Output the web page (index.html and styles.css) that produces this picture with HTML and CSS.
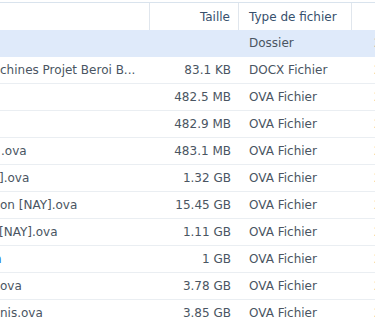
FILE: index.html
```html
<!DOCTYPE html>
<html lang="fr">
<head>
<meta charset="utf-8">
<title>Fichiers</title>
<link rel="stylesheet" href="styles.css">
</head>
<body>
<div class="grid">
  <div class="row head">
    <div class="cell name"></div>
    <div class="cell size">Taille</div>
    <div class="cell type">Type de fichier</div>
    <div class="cell date"></div>
  </div>
  <div class="row selected">
    <div class="cell name"></div>
    <div class="cell size"></div>
    <div class="cell type">Dossier</div>
    <div class="cell date">2024/03/12</div>
  </div>
  <div class="row">
    <div class="cell name">chines Projet Beroi B...</div>
    <div class="cell size">83.1 KB</div>
    <div class="cell type">DOCX Fichier</div>
    <div class="cell date">2024/03/12</div>
  </div>
  <div class="row">
    <div class="cell name"></div>
    <div class="cell size">482.5 MB</div>
    <div class="cell type">OVA Fichier</div>
    <div class="cell date">2024/03/12</div>
  </div>
  <div class="row">
    <div class="cell name"></div>
    <div class="cell size">482.9 MB</div>
    <div class="cell type">OVA Fichier</div>
    <div class="cell date">2024/03/12</div>
  </div>
  <div class="row">
    <div class="cell name"><span class="frag in1">.ova</span></div>
    <div class="cell size">483.1 MB</div>
    <div class="cell type">OVA Fichier</div>
    <div class="cell date">2024/03/12</div>
  </div>
  <div class="row">
    <div class="cell name"><span class="frag cut2">].ova</span></div>
    <div class="cell size">1.32 GB</div>
    <div class="cell type">OVA Fichier</div>
    <div class="cell date">2024/03/12</div>
  </div>
  <div class="row">
    <div class="cell name">on [NAY].ova</div>
    <div class="cell size">15.45 GB</div>
    <div class="cell type">OVA Fichier</div>
    <div class="cell date">2024/03/12</div>
  </div>
  <div class="row">
    <div class="cell name"><span class="frag cut1">[NAY].ova</span></div>
    <div class="cell size">1.11 GB</div>
    <div class="cell type">OVA Fichier</div>
    <div class="cell date">2024/03/12</div>
  </div>
  <div class="row">
    <div class="cell name"><span class="frag link cut5">n</span></div>
    <div class="cell size">1 GB</div>
    <div class="cell type">OVA Fichier</div>
    <div class="cell date">2024/03/12</div>
  </div>
  <div class="row">
    <div class="cell name">ova</div>
    <div class="cell size">3.78 GB</div>
    <div class="cell type">OVA Fichier</div>
    <div class="cell date">2024/03/12</div>
  </div>
  <div class="row">
    <div class="cell name">nis.ova</div>
    <div class="cell size">3.85 GB</div>
    <div class="cell type">OVA Fichier</div>
    <div class="cell date">2024/03/12</div>
  </div>
</div>
</body>
</html>
```
FILE: styles.css
```css
html, body {
  margin: 0;
  padding: 0;
  background: #ffffff;
  overflow: hidden;
}
body {
  font-family: "DejaVu Sans", Verdana, sans-serif;
  font-size: 12px;
  color: #4a5562;
  padding-top: 2px;
}
.grid {
  width: 460px;
  border-top: 1px solid #d9e3ed;
}
.row {
  display: grid;
  grid-template-columns: 150px 89px 113px 1fr;
  height: 27px;
  box-sizing: border-box;
  border-bottom: 1px solid #eaeef2;
  background: #ffffff;
}
.row.head {
  border-bottom: none;
  color: #37506d;
}
.row.selected {
  background: #dfeafa;
  border-bottom-color: #dfeafa;
}
.cell {
  display: flex;
  align-items: center;
  white-space: nowrap;
  overflow: hidden;
  min-width: 0;
}
.head .cell {
  border-right: 1px solid #e0e6ed;
}
.cell.name {
  padding-right: 8px;
}
.cell.size {
  justify-content: flex-end;
  padding-right: 8px;
}
.cell.type {
  padding-left: 10px;
}
.cell.date {
  padding-left: 22px;
}
.frag.in1 { margin-left: 1px; }
.frag.cut1 { margin-left: -1px; }
.frag.cut2 { margin-left: -1px; }
.frag.cut5 { margin-left: -6px; }
.link { color: #1a74d6; }
```
